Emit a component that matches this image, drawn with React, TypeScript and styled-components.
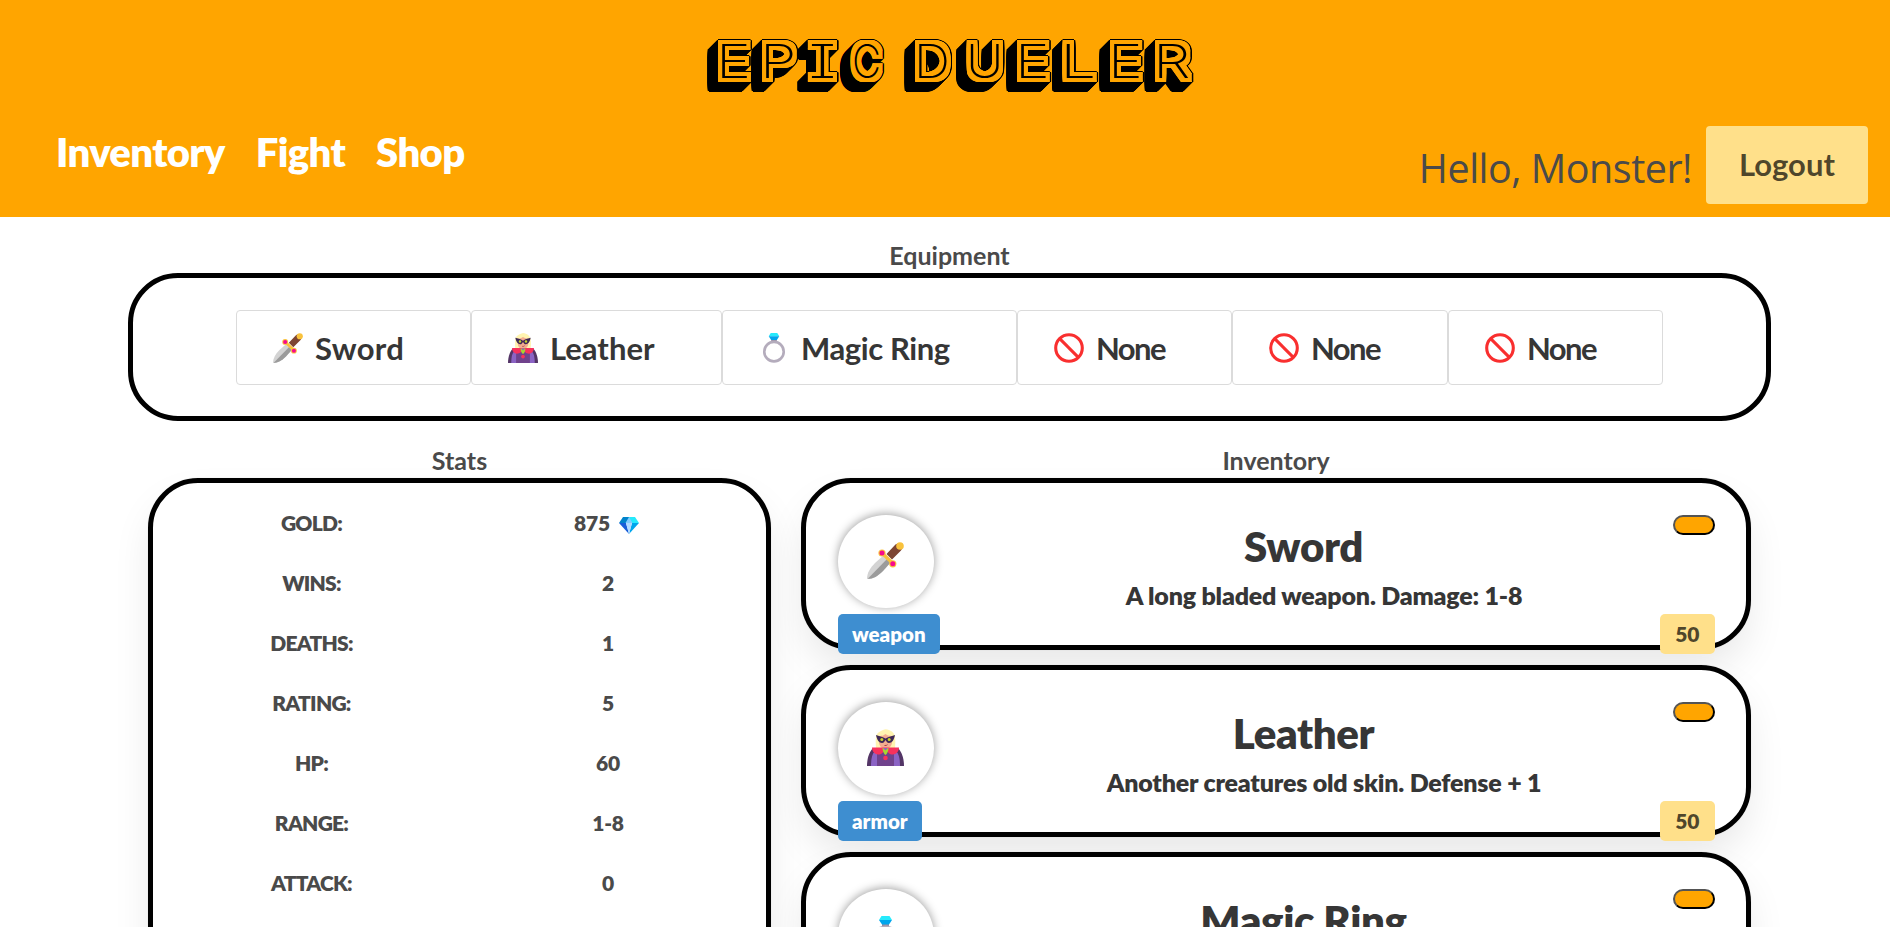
import React from 'react';
import styled, { createGlobalStyle } from 'styled-components';

const GlobalStyle = createGlobalStyle`
  *, *::before, *::after { box-sizing: border-box; }
  html, body { margin: 0; padding: 0; background: #fff; overflow: hidden; }
  body { font-family: Lato, "Open Sans", sans-serif; font-weight: 700; color: #4a4a4a; }
  h1, h2, h3, p { margin: 0; font: inherit; }
  button { font: inherit; cursor: pointer; }
`;

/* ---------- logo lettering ---------- */

const ring = (r: number, step: number, cut: number) => {
  const points: [number, number][] = [];
  for (let a = -r; a <= r + 0.01; a += step) {
    points.push([a, -r], [a, r], [-r, a], [r, a]);
  }
  return points.filter(([x, y]) => Math.abs(x) + Math.abs(y) <= 2 * r - cut);
};

const inlineShade = (stretch: number) => {
  const shadow = (x: number, y: number, color: string) =>
    `${(x / stretch).toFixed(2)}px ${y.toFixed(2)}px 0 ${color}`;
  const list = ring(4, 1, 0).map(([x, y]) => shadow(x, y, 'orange'));
  const edge = ring(5.4, 1.08, 1);
  for (let depth = 0; depth <= 9; depth += 1) {
    edge.forEach(([x, y]) => list.push(shadow(x - depth, y + depth, '#000')));
  }
  return list.join(',');
};

const Logo = styled.h1`
  display: flex;
  justify-content: center;
  height: 126px;
  padding-left: 19px;
  font-family: Inter, sans-serif;
  font-weight: 200;
  font-size: 46px;
  line-height: 122px;
  font-feature-settings: "cv08";
  color: #000;
`;

const Letter = styled.span<{ $width: number; $stretch: number }>`
  display: block;
  width: ${(p) => p.$width}px;
  white-space: pre;
  transform: scaleX(${(p) => p.$stretch});
  transform-origin: 0 0;
  text-shadow: ${(p) => inlineShade(p.$stretch)};
`;

const letters: [string, number, number][] = [
  ['E', 44, 1.29], ['P', 48, 1.28], ['I', 43.5, 1.58], ['C', 40.5, 0.87], [' ', 22, 1],
  ['D', 51.5, 1.09], ['U', 49, 1.12], ['E', 45.5, 1.28], ['L', 47.4, 1.4], ['E', 45.4, 1.28], ['R', 40, 1.31],
];

/* ---------- header ---------- */

const Header = styled.header`
  height: 217px;
  background: orange;
`;

const HeaderRow = styled.div`
  display: flex;
  justify-content: space-between;
  align-items: flex-start;
  padding: 0 22px 0 56px;
`;

const Nav = styled.nav`
  display: flex;
  gap: 31px;
`;

const NavLink = styled.a`
  font-size: 40px;
  line-height: 53px;
  font-weight: 800;
  letter-spacing: -0.65px;
  color: #fff;
`;

const Account = styled.div`
  display: flex;
  gap: 14px;
`;

const Greeting = styled.span`
  padding-top: 4px;
  font-family: "Open Sans", sans-serif;
  font-size: 39.5px;
  line-height: 76px;
  font-weight: 400;
  letter-spacing: -0.5px;
`;

const LogoutButton = styled.button`
  width: 162px;
  height: 78px;
  padding: 0 0 3px;
  border: 0;
  border-radius: 4px;
  background: #ffe08a;
  color: rgba(0, 0, 0, 0.7);
  font-size: 31px;
`;

/* ---------- panels ---------- */

const SectionLabel = styled.h2`
  height: 37px;
  font-size: 25px;
  line-height: 39px;
  text-align: center;
`;

const Page = styled.main`
  width: 1643px;
  height: 710px;
  margin-left: 128px;
  padding-top: 19px;
`;

const EquipmentPanel = styled.section`
  display: flex;
  justify-content: center;
  align-items: center;
  height: 148px;
  border: 5px solid #000;
  border-radius: 50px;
`;

const Slot = styled.button<{ $width: number; $spacing: number }>`
  display: flex;
  align-items: center;
  gap: 11px;
  width: ${(p) => p.$width}px;
  height: 75px;
  padding: 2px 0 0 35px;
  border: 1px solid #dbdbdb;
  border-radius: 4px;
  background: #fff;
  color: #363636;
  font-size: 31px;
  letter-spacing: ${(p) => p.$spacing}px;
  white-space: nowrap;
`;

const Columns = styled.div`
  display: grid;
  grid-template-columns: 623px 950px;
  gap: 30px;
  padding: 20px 20px 0;
`;

const StatsPanel = styled.section`
  height: 560px;
  padding: 10px 20px 0 0;
  border: 5px solid #000;
  border-radius: 50px;
  background: #fff;
  box-shadow: 0 20px 40px -5px rgba(10, 10, 10, 0.1), 0 0 0 1px rgba(10, 10, 10, 0.02);
`;

const StatRow = styled.div`
  display: grid;
  grid-template-columns: 317px 276px;
  height: 60px;
  font-size: 21px;
  line-height: 60px;
  font-weight: 800;
  letter-spacing: -0.75px;
  text-align: center;
`;

const StatValue = styled.span`
  display: flex;
  justify-content: center;
  align-items: center;
  gap: 9px;
  letter-spacing: -0.2px;
`;

const CardList = styled.div`
  display: flex;
  flex-direction: column;
  gap: 15px;
`;

const Card = styled.article`
  display: flex;
  align-items: flex-start;
  flex: none;
  height: 172px;
  padding: 32px 31px 0 32px;
  border: 5px solid #000;
  border-radius: 50px;
  background: #fff;
  color: #363636;
  box-shadow: 0 20px 40px -5px rgba(10, 10, 10, 0.1), 0 0 0 1px rgba(10, 10, 10, 0.02);
`;

const CardSide = styled.div<{ $width: number; $align: string }>`
  display: flex;
  flex-direction: column;
  justify-content: space-between;
  align-items: ${(p) => p.$align};
  flex: none;
  width: ${(p) => p.$width}px;
  height: 139px;
`;

const Avatar = styled.div`
  display: flex;
  justify-content: center;
  align-items: center;
  width: 96px;
  height: 93px;
  padding: 0 2px 2px 0;
  border-radius: 50%;
  background: #fff;
  box-shadow: 0 -1px 10px rgba(0, 0, 0, 0.38);
`;

const Tag = styled.span<{ $kind: 'type' | 'price' }>`
  height: 40px;
  padding: 0 ${(p) => (p.$kind === 'type' ? 14 : 15.5)}px;
  border-radius: 5px;
  line-height: 40px;
  white-space: nowrap;
  background: ${(p) => (p.$kind === 'type' ? '#3e8ed0' : '#ffe08a')};
  color: ${(p) => (p.$kind === 'type' ? '#fff' : 'rgba(0, 0, 0, 0.7)')};
  font-size: ${(p) => (p.$kind === 'type' ? 20.5 : 21)}px;
  font-weight: 800;
`;

const CardBody = styled.div`
  flex: 1;
  margin-left: 13px;
  padding-top: 6px;
  text-align: center;
`;

const ItemName = styled.h3`
  font-size: 42px;
  line-height: 50px;
  font-weight: 800;
  letter-spacing: -0.4px;
`;

const ItemText = styled.p`
  margin-top: 6px;
  padding-left: 41px;
  font-size: 25px;
  line-height: 37px;
  font-weight: 800;
  letter-spacing: -0.2px;
`;

const EquipToggle = styled.button`
  width: 42px;
  height: 20px;
  padding: 0;
  border: 2px outset #000;
  border-radius: 10px;
  background: orange;
`;

/* ---------- icons ---------- */

type IconProps = { size: number };

const Dagger = ({ size }: IconProps) => (
  <svg width={size} height={size} viewBox="0 0 37 37">
    <path d="M0 37C0 31 3 26 8 21l9-8 7 7-8 9C11 34 6 37 0 37Z" fill="#d3d3d3" />
    <path d="M1.500 36 20.500 16.500 24 20l-8 9C11 34 6 37 1 37Z" fill="#9b9b9b" />
    <path d="M19.500 12 28 3c2-2 5-2 6.500 0 1.500 1.500 1 3.500-.5 5.500l-9 9Z" fill="#7d4533" />
    <path d="M15.500 11.500 26.500 22" stroke="#f9c23c" strokeWidth="3.400" />
    <circle cx="33" cy="4" r="3.800" fill="#f9c23c" />
    <circle cx="15" cy="11" r="3.600" fill="#f9c23c" />
    <circle cx="25.800" cy="21.800" r="3.600" fill="#f9c23c" />
    <circle cx="15" cy="11" r="2.500" fill="#f70a8d" />
    <circle cx="25.800" cy="21.800" r="2.500" fill="#f70a8d" />
  </svg>
);

const Villain = ({ size }: IconProps) => (
  <svg width={size} height={size} viewBox="0 0 37 37">
    <path d="M9 19C8.500 13 8.500 8 10 5c1-2 4-3 6-4 2-1.300 4-1 6 0 2 .8 4 2 5 4 1.500 3 1.500 8 1 14Z" fill="#fff4b0" />
    <path d="M12 7c4 0 5-1 6.500-2 1.500 1 3 2 6.500 2v6c0 4-3 7-6.500 7S12 17 12 13Z" fill="#f3ad90" />
    <path d="M0 37c0-7 2-14 6-18h25c4 4 6 11 6 18Z" fill="#533566" />
    <path d="M4 37c0-7 1-12 4-15h21c3 3 4 8 4 15Z" fill="#8b63c4" />
    <path d="M10 20h17v17H10Z" fill="#70428c" />
    <path d="M5 18.500h27c0 4-3 7-6 7-4 0-5-2-7.500-6-2.500 4-3.500 6-7.500 6-3 0-6-3-6-7Z" fill="#f8315c" />
    <path d="M15.500 19h6c0 3-1.500 6-3 7-1.500-1-3-4-3-7Z" fill="#a7d82f" />
    <path d="M16 19h5l-2.500 2.500Z" fill="#8b63c4" />
    <path d="M9 6c3 1 6 1.500 9.500 3.500C22 7.500 25 7 28 6c-1 5-3 8-6 8-2 0-2.500-2-3.500-3-1 1-1.500 3-3.500 3-3 0-5-3-6-8Z" fill="#3e2855" />
    <circle cx="14.800" cy="10.500" r="1.500" fill="#c5d52b" />
    <circle cx="22.200" cy="10.500" r="1.500" fill="#c5d52b" />
    <path d="M17.500 16.500q2 .3 3-.8" stroke="#9b2f3f" strokeWidth=".9" fill="none" />
    <circle cx="18.500" cy="29" r="2.300" fill="#f8315c" />
  </svg>
);

const MagicRing = ({ size }: IconProps) => (
  <svg width={size} height={size} viewBox="0 0 37 37">
    <path d="M15 7h7v4h-7Z" fill="#998ea4" />
    <circle cx="18.500" cy="23" r="12" fill="none" stroke="#b4acbc" strokeWidth="3.200" />
    <path d="M14.500 0h8l2.500 4H12Z" fill="#26eafc" />
    <path d="M12 4h13l-3 4.500h-7Z" fill="#00a6ed" />
  </svg>
);

const Forbidden = ({ size }: IconProps) => (
  <svg width={size} height={size} viewBox="0 0 37 37">
    <g fill="none" stroke="#f92f2f" strokeWidth="3.800">
      <circle cx="18.500" cy="18.500" r="16.400" />
      <path d="m7 7 23 23" />
    </g>
  </svg>
);

const Gem = ({ size }: IconProps) => (
  <svg width={size} height={(size * 17) / 20} viewBox="0 0 20 17">
    <path d="M4 0h6v6H0Z" fill="#0083cb" />
    <path d="M10 0h6l4 6H10Z" fill="#26eafc" />
    <path d="M0 6h7l3 11Z" fill="#185dd8" />
    <path d="M13 6h7L10 17Z" fill="#00a6ed" />
    <path d="M7 6h6l-3 11Z" fill="#b0d9ff" />
    <path d="m10 0 3.500 6h-7Z" fill="#83cbff" />
  </svg>
);

const GemCell = styled.span`
  display: flex;
  padding: 4px 3px 0 0;
`;

const IconCell = styled.span`
  display: flex;
  justify-content: center;
  flex: none;
  width: 32px;
`;

/* ---------- data ---------- */

const equipment = [
  { name: 'Sword', width: 235, spacing: 0.3, Icon: Dagger },
  { name: 'Leather', width: 251, spacing: 0, Icon: Villain },
  { name: 'Magic Ring', width: 295, spacing: -0.4, Icon: MagicRing },
  { name: 'None', width: 215, spacing: -1.6, Icon: Forbidden },
  { name: 'None', width: 216, spacing: -1.6, Icon: Forbidden },
  { name: 'None', width: 215, spacing: -1.6, Icon: Forbidden },
];

const stats = [
  ['GOLD:', '875'], ['WINS:', '2'], ['DEATHS:', '1'], ['RATING:', '5'],
  ['HP:', '60'], ['RANGE:', '1-8'], ['ATTACK:', '0'],
];

const items = [
  { name: 'Sword', text: 'A long bladed weapon. Damage: 1-8', type: 'weapon', price: 50, Icon: Dagger },
  { name: 'Leather', text: 'Another creatures old skin. Defense + 1', type: 'armor', price: 50, Icon: Villain },
  { name: 'Magic Ring', text: '', type: '', price: 0, Icon: MagicRing },
];

export default function App() {
  return (
    <>
      <GlobalStyle />
      <Header>
        <Logo>
          {letters.map(([char, width, stretch], i) => (
            <Letter key={i} $width={width} $stretch={stretch}>{char}</Letter>
          ))}
        </Logo>
        <HeaderRow>
          <Nav>
            <NavLink>Inventory</NavLink>
            <NavLink>Fight</NavLink>
            <NavLink>Shop</NavLink>
          </Nav>
          <Account>
            <Greeting>Hello, Monster!</Greeting>
            <LogoutButton>Logout</LogoutButton>
          </Account>
        </HeaderRow>
      </Header>
      <Page>
        <SectionLabel>Equipment</SectionLabel>
        <EquipmentPanel>
          {equipment.map(({ name, width, spacing, Icon }, i) => (
            <Slot key={i} $width={width} $spacing={spacing}>
              <IconCell><Icon size={30} /></IconCell>
              {name}
            </Slot>
          ))}
        </EquipmentPanel>
        <Columns>
          <div>
            <SectionLabel>Stats</SectionLabel>
            <StatsPanel>
              {stats.map(([label, value]) => (
                <StatRow key={label}>
                  <span>{label}</span>
                  <StatValue>
                    {value}
                    {label === 'GOLD:' && <GemCell><Gem size={20} /></GemCell>}
                  </StatValue>
                </StatRow>
              ))}
            </StatsPanel>
          </div>
          <div>
            <SectionLabel>Inventory</SectionLabel>
            <CardList>
              {items.map(({ name, text, type, price, Icon }) => (
                <Card key={name}>
                  <CardSide $width={96} $align="flex-start">
                    <Avatar><Icon size={37} /></Avatar>
                    {type && <Tag $kind="type">{type}</Tag>}
                  </CardSide>
                  <CardBody>
                    <ItemName>{name}</ItemName>
                    {text && <ItemText>{text}</ItemText>}
                  </CardBody>
                  <CardSide $width={55} $align="flex-end">
                    <EquipToggle aria-label={`Equip ${name}`} />
                    {price > 0 && <Tag $kind="price">{price}</Tag>}
                  </CardSide>
                </Card>
              ))}
            </CardList>
          </div>
        </Columns>
      </Page>
    </>
  );
}
